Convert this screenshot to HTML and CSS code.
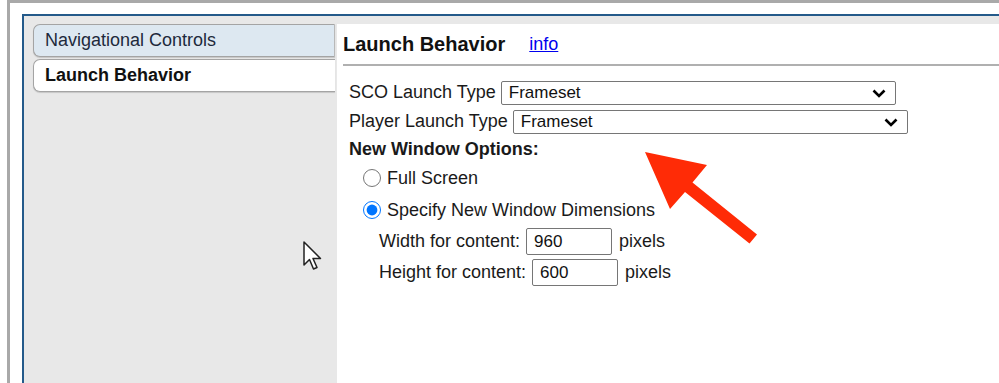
FILE: index.html
```html
<!DOCTYPE html>
<html lang="en">
<head>
  <meta charset="UTF-8" />
  <title>Launch Behavior</title>
  <link rel="stylesheet" href="styles.css">
</head>
<body>
  <div class="frame">
    <div class="shell">
      <div class="sidebar">
        <div class="tab">Navigational Controls</div>
        <div class="tab active">Launch Behavior</div>
      </div>

      <div class="content">
        <div class="head">
          <h1>Launch Behavior</h1>
          <a href="#">info</a>
        </div>

        <div class="form">
          <div class="row">
            <label>SCO Launch Type</label>
            <span class="select">
              <select><option>Frameset</option></select>
              <svg class="chev" width="14" height="9" viewBox="0 0 14 9"><path d="M1.5 1.5 L7 7 L12.5 1.5" fill="none" stroke="#000" stroke-width="2.6"/></svg>
            </span>
          </div>
          <div class="row">
            <label>Player Launch Type</label>
            <span class="select">
              <select><option>Frameset</option></select>
              <svg class="chev" width="14" height="9" viewBox="0 0 14 9"><path d="M1.5 1.5 L7 7 L12.5 1.5" fill="none" stroke="#000" stroke-width="2.6"/></svg>
            </span>
          </div>

          <div class="options-title">New Window Options:</div>
          <label class="radio-row"><input type="radio" name="win" /> Full Screen</label>
          <label class="radio-row"><input type="radio" name="win" checked /> Specify New Window Dimensions</label>

          <div class="dim-row">
            <label>Width for content:</label>
            <input type="text" value="960" />
            <span>pixels</span>
          </div>
          <div class="dim-row">
            <label>Height for content:</label>
            <input type="text" value="600" />
            <span>pixels</span>
          </div>
        </div>
      </div>
    </div>
  </div>

  <!-- mouse pointer -->
  <svg class="cursor" width="20" height="30" viewBox="0 0 20 30">
    <path d="M1 1 L1 24 L6.5 18.5 L10.5 28 L14 26.5 L10 17.5 L17.5 17.5 Z" fill="#fff" stroke="#222" stroke-width="1.5" stroke-linejoin="round"/>
  </svg>

  <!-- red callout arrow -->
  <svg class="callout" width="999" height="383" viewBox="0 0 999 383">
    <polygon points="645,152 707,165 692.5,182.5 757,234.5 749.5,243.5 685,192 670,209" fill="#ff2b06"/>
  </svg>
</body>
</html>
```

FILE: styles.css
```css
body {
  margin: 0;
  height: 383px;
  overflow: hidden;
  position: relative;
  background: #fff;
  font-family: "Liberation Sans", Arial, sans-serif;
  color: #1a1a1a;
}
.frame {
  margin-left: 7px;
  height: 383px;
  box-sizing: border-box;
  border-top: 3px solid #a9a9a9;
  border-left: 3px solid #a9a9a9;
  padding: 11px 0 0 12px;
}
.shell {
  display: flex;
  height: 100%;
  border-top: 2px solid #245a8a;
  border-left: 2px solid #245a8a;
  background: #e8e8e8;
}
.sidebar {
  width: 311px;
  flex-shrink: 0;
  box-sizing: border-box;
  padding: 8px 0 0 9px;
}
.tab {
  height: 33px;
  box-sizing: border-box;
  display: flex;
  align-items: center;
  padding-left: 11px;
  margin-bottom: 2px;
  font-size: 18px;
  color: #1e2a3c;
  background: #dde8f1;
  border: 1px solid #a4a4a4;
  border-right: 1px solid #b8b8b8;
  border-radius: 7px 0 0 7px;
  box-shadow: 0 1px 1px rgba(0,0,0,0.15);
}
.tab.active {
  background: #fff;
  font-weight: bold;
  color: #111;
  border-right: none;
}
.content {
  flex: 1;
  margin: 8px 0 0 2px;
  background: #fff;
  padding-left: 6px;
}
.head {
  height: 40px;
  display: flex;
  align-items: center;
  gap: 24px;
  border-bottom: 2px solid #b0b0b0;
}
.head h1 {
  margin: 0;
  font-size: 20px;
  font-weight: bold;
  color: #111;
}
.head a {
  font-size: 18px;
  color: #0000ee;
}
.form {
  padding: 12px 0 0 6px;
  font-size: 18px;
}
.row {
  height: 29px;
  display: flex;
  align-items: center;
}
.select {
  position: relative;
  display: flex;
  margin-left: 5px;
}
.select select {
  appearance: none;
  width: 395px;
  height: 24px;
  font-family: "Liberation Sans", Arial, sans-serif;
  font-size: 17px;
  color: #111;
  background: #fff;
  border: 1px solid #767676;
  border-radius: 2px;
  padding: 0 7px;
}
.chev {
  position: absolute;
  right: 10px;
  top: 8px;
  pointer-events: none;
}
.options-title {
  height: 26px;
  display: flex;
  align-items: center;
  font-weight: bold;
}
.radio-row {
  height: 32px;
  display: flex;
  align-items: center;
  padding-left: 14px;
}
.radio-row input {
  width: 18px;
  height: 18px;
  margin: 0 6px 0 0;
  accent-color: #0075ff;
}
.dim-row {
  height: 31px;
  display: flex;
  align-items: center;
  padding-left: 30px;
}
.dim-row input {
  width: 86px;
  height: 27px;
  box-sizing: border-box;
  margin: 0 7px 0 6px;
  padding: 0 7px;
  font-family: "Liberation Sans", Arial, sans-serif;
  font-size: 17px;
  color: #111;
  border: 1px solid #767676;
  border-radius: 2px;
}
.cursor {
  position: absolute;
  left: 303px;
  top: 241px;
}
.callout {
  position: absolute;
  left: 0;
  top: 0;
  pointer-events: none;
}
```
